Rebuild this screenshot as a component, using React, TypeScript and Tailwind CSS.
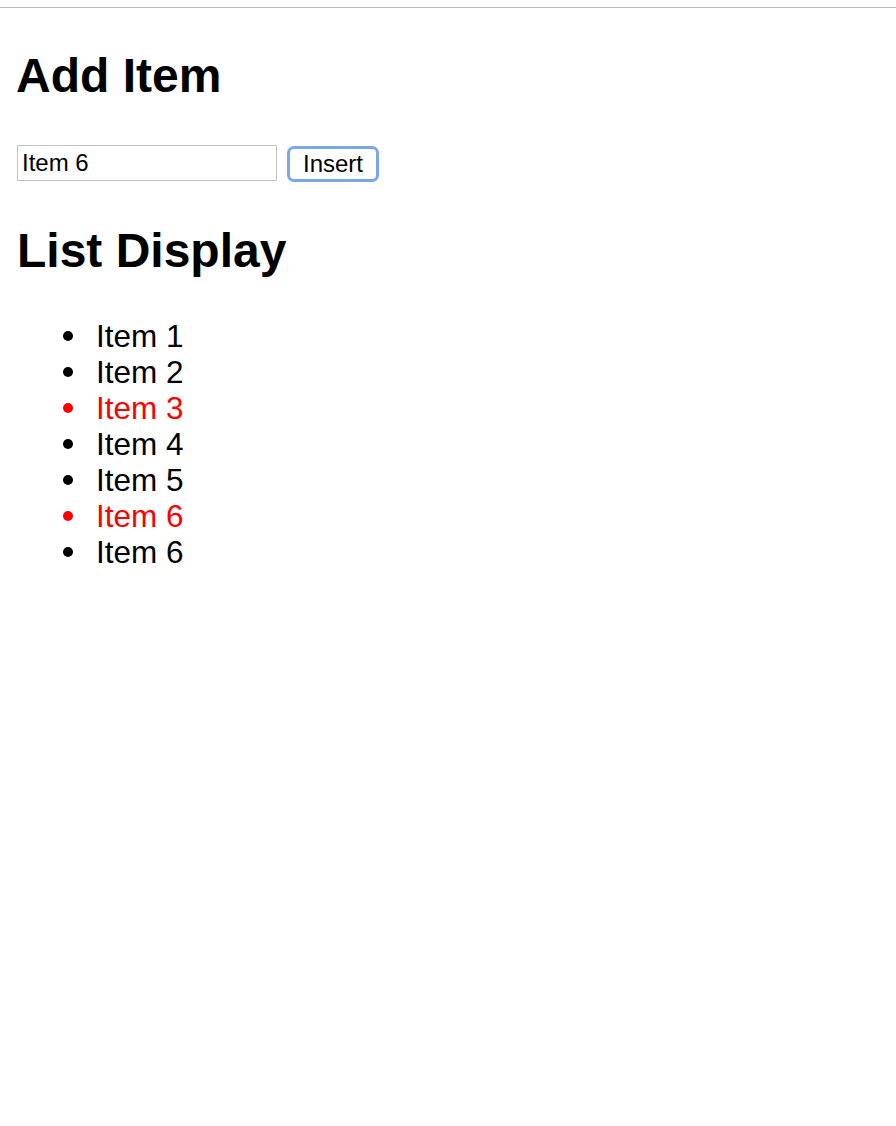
import React, { useState } from 'react';

// Simple list page: add item form + list display

type Item = { label: string; highlight: boolean };

const initialItems: Item[] = [
  { label: 'Item 1', highlight: false },
  { label: 'Item 2', highlight: false },
  { label: 'Item 3', highlight: true },
  { label: 'Item 4', highlight: false },
  { label: 'Item 5', highlight: false },
  { label: 'Item 6', highlight: true },
  { label: 'Item 6', highlight: false },
];

export default function App() {
  const [items, setItems] = useState<Item[]>(initialItems);
  const [value, setValue] = useState('Item 6');

  const handleInsert = () => {
    if (!value.trim()) return;
    setItems(prev => [...prev, { label: value, highlight: false }]);
  };

  return (
    <div className="min-h-screen bg-white text-black" style={{ fontFamily: '"Liberation Sans", Arial, sans-serif' }}>
      <div className="h-[7px]" />
      <div className="h-px bg-[#bdbdbd]" />

      <div className="px-[17px]">
        {/* ── Add Item ── */}
        <h1 className="mt-[40px] -ml-px text-[48px] font-bold leading-[55px]">Add Item</h1>
        <div className="mt-[42px] flex items-start gap-[10px]">
          <input
            value={value}
            onChange={e => setValue(e.target.value)}
            className="w-[260px] h-[36px] border border-[#c3c3c3] px-[4px] text-[24px] leading-none outline-none"
          />
          <button
            onClick={handleInsert}
            className="mt-px w-[92px] h-[36px] rounded-[7px] border-[3px] border-[#7aa6ee] bg-white text-[24px] leading-none">
            Insert
          </button>
        </div>

        {/* ── List Display ── */}
        <h1 className="mt-[41px] text-[48px] font-bold leading-[55px]">List Display</h1>
        <ul className="mt-[40px] pl-[46px] text-[31.5px] leading-[36px]">
          {items.map((it, i) => (
            <li key={i} className={`flex items-center gap-[23px] ${it.highlight ? 'text-[#ff0000]' : 'text-black'}`}>
              <span className="w-[10px] h-[10px] rounded-full bg-current" />
              <span>{it.label}</span>
            </li>
          ))}
        </ul>
      </div>
    </div>
  );
}
